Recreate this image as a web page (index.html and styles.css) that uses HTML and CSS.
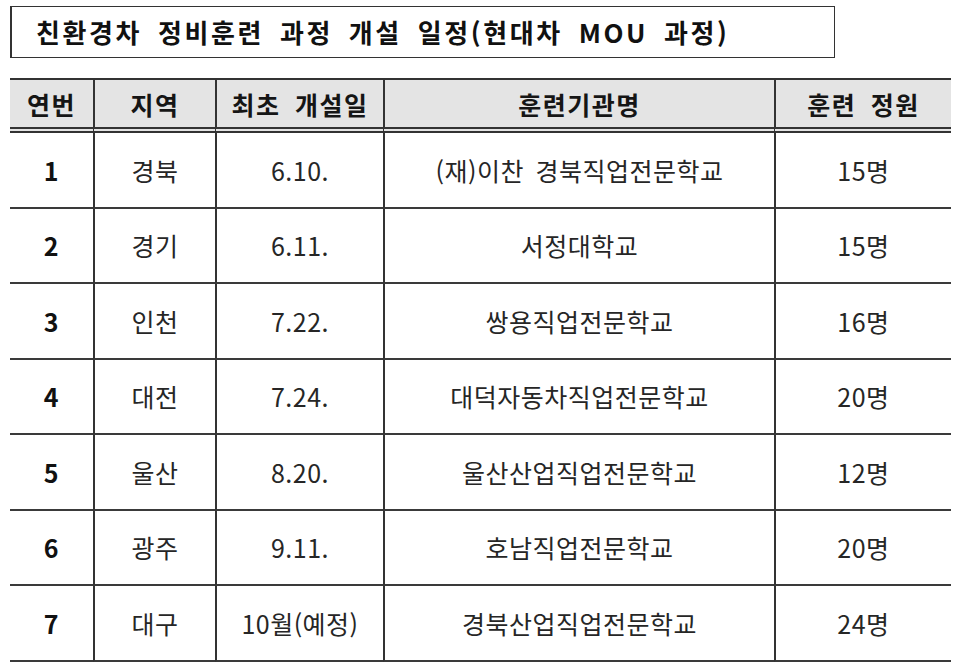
FILE: index.html
```html
<!DOCTYPE html>
<html lang="ko">
<head>
<meta charset="utf-8">
<title>친환경차 정비훈련 과정 개설 일정</title>
<link rel="stylesheet" href="styles.css">
</head>
<body>
<div class="page">
  <div class="title-box">
    <h1 class="title">친환경차 정비훈련 과정 개설 일정(현대차 MOU 과정)</h1>
  </div>
  <table class="schedule">
    <colgroup>
      <col class="c-no">
      <col class="c-region">
      <col class="c-date">
      <col class="c-inst">
      <col class="c-cap">
    </colgroup>
    <thead>
      <tr>
        <th>연번</th>
        <th>지역</th>
        <th>최초 개설일</th>
        <th>훈련기관명</th>
        <th>훈련 정원</th>
      </tr>
    </thead>
    <tbody>
      <tr><td class="no">1</td><td>경북</td><td>6.10.</td><td>(재)이찬 경북직업전문학교</td><td>15명</td></tr>
      <tr><td class="no">2</td><td>경기</td><td>6.11.</td><td>서정대학교</td><td>15명</td></tr>
      <tr><td class="no">3</td><td>인천</td><td>7.22.</td><td>쌍용직업전문학교</td><td>16명</td></tr>
      <tr><td class="no">4</td><td>대전</td><td>7.24.</td><td>대덕자동차직업전문학교</td><td>20명</td></tr>
      <tr><td class="no">5</td><td>울산</td><td>8.20.</td><td>울산산업직업전문학교</td><td>12명</td></tr>
      <tr><td class="no">6</td><td>광주</td><td>9.11.</td><td>호남직업전문학교</td><td>20명</td></tr>
      <tr><td class="no">7</td><td>대구</td><td>10월(예정)</td><td>경북산업직업전문학교</td><td>24명</td></tr>
    </tbody>
  </table>
</div>
</body>
</html>
```

FILE: styles.css
```css
html, body {
  margin: 0;
  padding: 0;
  background: #ffffff;
}

.page {
  padding: 6px 0 0 10px;
  font-family: "Noto Sans CJK KR", "Noto Sans", sans-serif;
  color: #222;
}

.title-box {
  box-sizing: border-box;
  width: 825px;
  height: 52px;
  border: 1px solid #333;
  border-left-width: 2px;
  display: flex;
  align-items: center;
  padding-left: 24px;
}

.title {
  margin: 0;
  font-size: 26px;
  font-weight: 700;
  color: #111;
  word-spacing: 6px;
  letter-spacing: 2.6px;
  line-height: 1;
}

.schedule {
  margin-top: 20px;
  width: 941px;
  border-collapse: separate;
  border-spacing: 0;
  border-top: 2px solid #333;
  table-layout: fixed;
}

.c-no { width: 83px; }
.c-region { width: 122px; }
.c-date { width: 168px; }
.c-inst { width: 391px; }
.c-cap { width: 177px; }

.schedule th {
  background: #e4e4e4;
  height: 47px;
  padding: 0;
  font-size: 25px;
  font-weight: 700;
  color: #151515;
  letter-spacing: 1.5px;
  word-spacing: 6px;
  border-bottom: 6px double #333;
  text-align: center;
  vertical-align: middle;
}

.schedule td {
  height: 73.5px;
  padding: 0;
  font-size: 25px;
  font-weight: 400;
  color: #262626;
  letter-spacing: 0.5px;
  word-spacing: 4px;
  border-bottom: 2px solid #3a3a3a;
  text-align: center;
  vertical-align: middle;
}

.schedule th + th,
.schedule td + td {
  border-left: 2px solid #333;
}

.schedule td.no {
  font-weight: 700;
  color: #111;
}
```
